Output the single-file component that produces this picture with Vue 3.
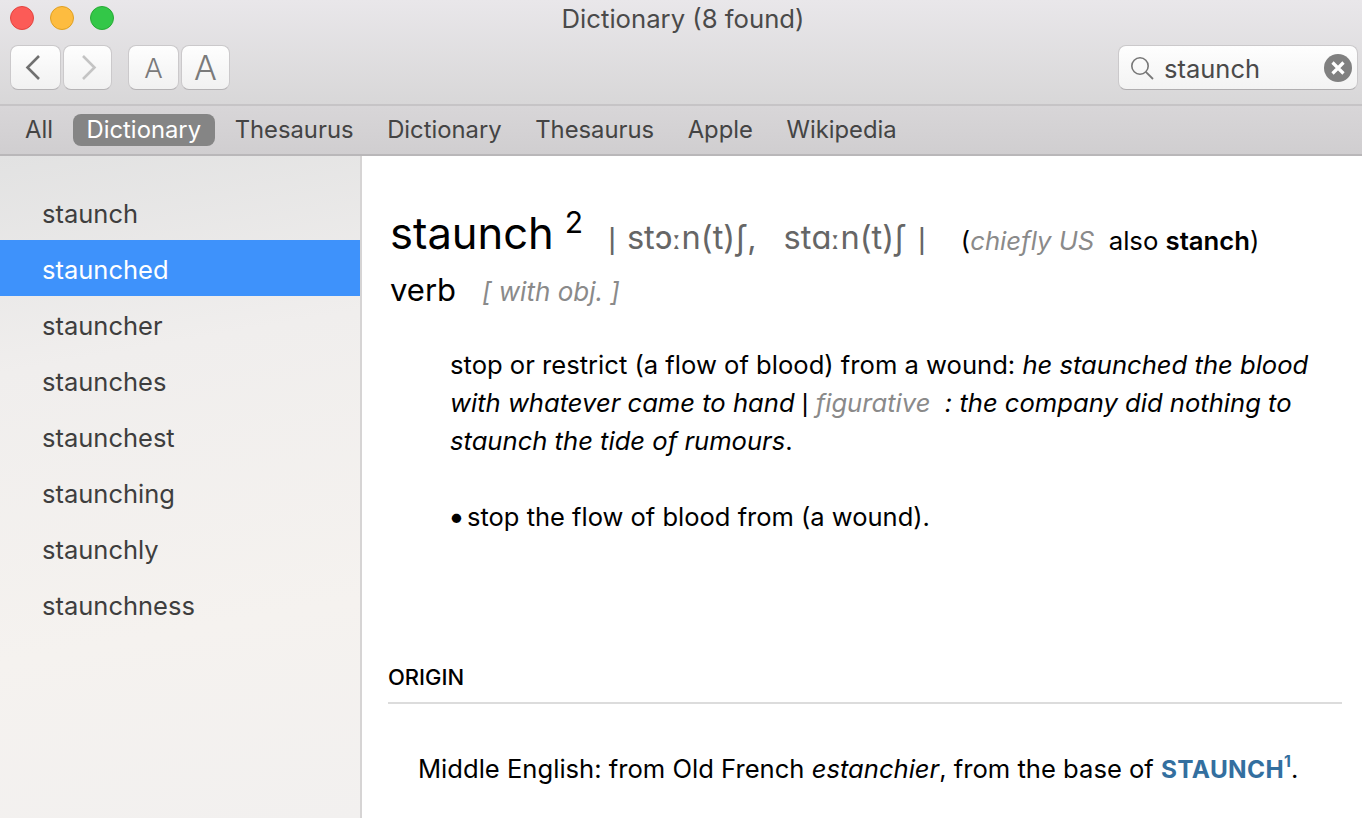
<script setup>
const tabs = ['All', 'Dictionary', 'Thesaurus', 'Dictionary', 'Thesaurus', 'Apple', 'Wikipedia']
const words = ['staunch', 'staunched', 'stauncher', 'staunches', 'staunchest', 'staunching', 'staunchly', 'staunchness']
</script>

<template>
  <div class="window">
    <header class="toolbar">
      <div class="title-row">
        <div class="lights">
          <span class="light red"></span>
          <span class="light yellow"></span>
          <span class="light green"></span>
        </div>
        <div class="title">Dictionary (8 found)</div>
      </div>
      <div class="tool-row">
        <div class="group">
          <button class="btn nav">
            <svg class="back" width="15" height="25" viewBox="0 0 15 25"><path d="M14 1 L2.5 12.5 L14 24" fill="none" stroke="#707070" stroke-width="2.6"/></svg>
          </button>
          <button class="btn nav second">
            <svg class="forward" width="15" height="25" viewBox="0 0 15 25"><path d="M1 1 L12.5 12.5 L1 24" fill="none" stroke="#c4c4c4" stroke-width="2.6"/></svg>
          </button>
        </div>
        <div class="group fonts">
          <button class="btn aa small">A</button>
          <button class="btn aa big second">A</button>
        </div>
        <div class="search">
          <svg class="glass" width="24" height="24" viewBox="0 0 24 24"><circle cx="10" cy="10" r="8.2" fill="none" stroke="#777" stroke-width="1.6"/><path d="M15.8 15.8 L23 23" stroke="#777" stroke-width="1.8"/></svg>
          <span class="query">staunch</span>
          <svg class="clear" width="28" height="28" viewBox="0 0 28 28"><circle cx="14" cy="14" r="14" fill="#808080"/><path d="M8.5 8.5 L19.5 19.5 M19.5 8.5 L8.5 19.5" stroke="#fff" stroke-width="3.2"/></svg>
        </div>
      </div>
    </header>
    <nav class="tabs">
      <span v-for="(t, i) in tabs" :key="i" class="tab" :class="{ active: i === 1 }">{{ t }}</span>
    </nav>
    <div class="body">
      <aside class="side">
        <div v-for="(w, i) in words" :key="w" class="word" :class="{ selected: i === 1 }">{{ w }}</div>
      </aside>
      <main class="content">
        <div class="head">
          <span class="hw">staunch</span><sup class="num">2</sup>
          <span class="ipa"><span class="bar">|</span><span class="ipa1">stɔ<span class="len">ː</span>n(t)ʃ,</span><span class="ipa2">stɑ<span class="len">ː</span>n(t)ʃ</span><span class="bar end">|</span></span>
          <span class="usage">(<i class="gray">chiefly US</i>&nbsp; also <b class="also">stanch</b>)</span>
        </div>
        <div class="pos"><span class="verb">verb</span><i class="gray obj">[ with obj. ]</i></div>
        <p class="def">stop or restrict (a flow of blood) from a wound: <i>he staunched the blood with whatever came to hand</i> <span class="pipe">|</span> <i class="gray">figurative</i> &nbsp;<i>: the company did nothing to staunch the tide of rumours</i>.</p>
        <p class="sub"><span class="bullet">•</span>stop the flow of blood from (a wound).</p>
        <h2 class="origin">ORIGIN</h2>
        <p class="etym">Middle English: from Old French <i>estanchier</i>, from the base of <b class="link">STAUNCH<sup>1</sup></b>.</p>
      </main>
    </div>
  </div>
</template>

<style>
html, body { margin: 0; overflow: hidden; }
</style>

<style scoped>
.window {
  width: 1362px;
  height: 818px;
  overflow: hidden;
  display: flex;
  flex-direction: column;
  font-family: Inter, "Liberation Sans", sans-serif;
  background: #fff;
}
.toolbar {
  box-sizing: border-box;
  background: linear-gradient(#e9e7ea, #d8d7d8);
  border-bottom: 2px solid #c6c4c6;
  flex: none;
  height: 106px;
}
.title-row { position: relative; height: 38px; }
.lights { display: flex; gap: 16px; padding: 6px 0 0 10px; }
.light { width: 24px; height: 24px; border-radius: 50%; box-sizing: border-box; }
.red { background: #fc5b57; border: 1px solid #e3443f; }
.yellow { background: #fdbc40; border: 1px solid #dfa023; }
.green { background: #33c748; border: 1px solid #27aa35; }
.title {
  position: absolute; inset: 0 0 auto 0; text-align: center; padding-left: 4px;
  font-size: 25.7px; line-height: 38px; color: #4a4a4a;
}
.tool-row { display: flex; align-items: flex-start; padding: 7px 4px 0 10px; }
.group { display: flex; gap: 2px; }
.fonts { margin-left: 16px; }
.btn {
  height: 45px; width: 51px; padding: 0; box-sizing: border-box;
  display: flex; align-items: center; justify-content: center;
  background: linear-gradient(#fefefe, #f1f1f1);
  border: 1px solid #cbc9cb; border-bottom-color: #b5b3b5;
  border-radius: 8px;
  font-family: inherit; color: #7a7a7a;
}
.second { width: 49px; }
.back { margin-right: 6px; }
.forward { margin-left: 4px; }
.aa { font-weight: 300; }
.aa.small { font-size: 27.5px; }
.aa.big { font-size: 34px; }
.search {
  margin-left: auto; width: 240px; height: 45px; box-sizing: border-box;
  display: flex; align-items: center; padding: 0 5px 0 11px;
  background: linear-gradient(#fefefe, #f3f3f3);
  border: 1px solid #cbc9cb; border-bottom-color: #b0aeb0; border-radius: 8px;
}
.query { font-size: 25.5px; color: #4a4a4a; margin-left: 10px; flex: 1; padding-top: 2px; }
.tabs {
  flex: none; height: 50px; box-sizing: border-box;
  display: flex; align-items: center; gap: 5.6px; padding: 0 0 0 11px;
  background: linear-gradient(#d8d6d8, #d0ced0);
  border-bottom: 2px solid #b9b7b9;
}
.tab {
  font-size: 23.8px; color: #444; padding: 0 14px; height: 32px; line-height: 31px;
  border-radius: 8px;
}
.tab.active { background: #858585; color: #fff; }
.body { flex: 1; display: flex; min-height: 0; }
.side {
  width: 362px; flex: none; box-sizing: border-box; padding-top: 28px;
  background: linear-gradient(170deg, #e2e2e2 0%, #f0eeed 30%, #f5f2ef 70%, #f2f0ef 100%);
  border-right: 2px solid #d6d4d4;
}
.word {
  height: 56px; line-height: 60px; padding-left: 42px;
  font-size: 25.5px; color: #3e3e3e;
}
.word.selected { background: #3e92fb; color: #fff; }
.content { flex: 1; padding: 0 20px 0 28px; color: #000; min-width: 0; }
.head { height: 102px; padding-top: 49px; box-sizing: border-box; white-space: nowrap; line-height: 56px; }
.hw { font-size: 43.5px; }
.num { font-size: 30px; margin-left: 11px; line-height: 0; vertical-align: 16px; }
.ipa { font-size: 32.6px; color: #666; margin-left: 25px; display: inline-flex; align-items: baseline; vertical-align: baseline; }
.len { font-family: "DejaVu Sans", sans-serif; font-size: 27px; }
.bar { font-family: "Liberation Sans", sans-serif; font-size: 30px; }
.ipa1 { margin-left: 11px; }
.ipa2 { margin-left: 27px; }
.end { margin-left: 12px; }
.usage { font-size: 25.7px; margin-left: 35px; position: relative; top: 1px; }
.also { font-weight: 600; }
.gray { color: #8a8a8a; }
.pos { height: 40px; line-height: 40px; margin-top: 12px; white-space: nowrap; }
.verb { font-size: 31px; margin-right: 26px; }
.obj { font-size: 26px; }
.def { margin: 36px 20px 0 60px; font-size: 25.6px; line-height: 38px; }
.pipe { font-family: "Liberation Sans", sans-serif; }
.sub { margin: 38px 20px 0 60px; font-size: 25.5px; line-height: 38px; }
.bullet { display: inline-block; width: 19px; margin-left: -2px; font-size: 30px; line-height: 0; vertical-align: -1px; }
.origin {
  margin: 124px 0 0 -2px; padding-bottom: 8px; font-size: 22px; font-weight: 500; line-height: 34px;
  border-bottom: 2px solid #dcdcdc;
}
.etym { margin: 46px 0 0 28px; font-size: 25.6px; line-height: 38px; white-space: nowrap; }
.link { color: #336f9f; font-weight: 700; font-size: 24.4px; letter-spacing: 0.35px; }
.link sup { font-size: 16px; line-height: 0; vertical-align: 11px; letter-spacing: 0; }
</style>
